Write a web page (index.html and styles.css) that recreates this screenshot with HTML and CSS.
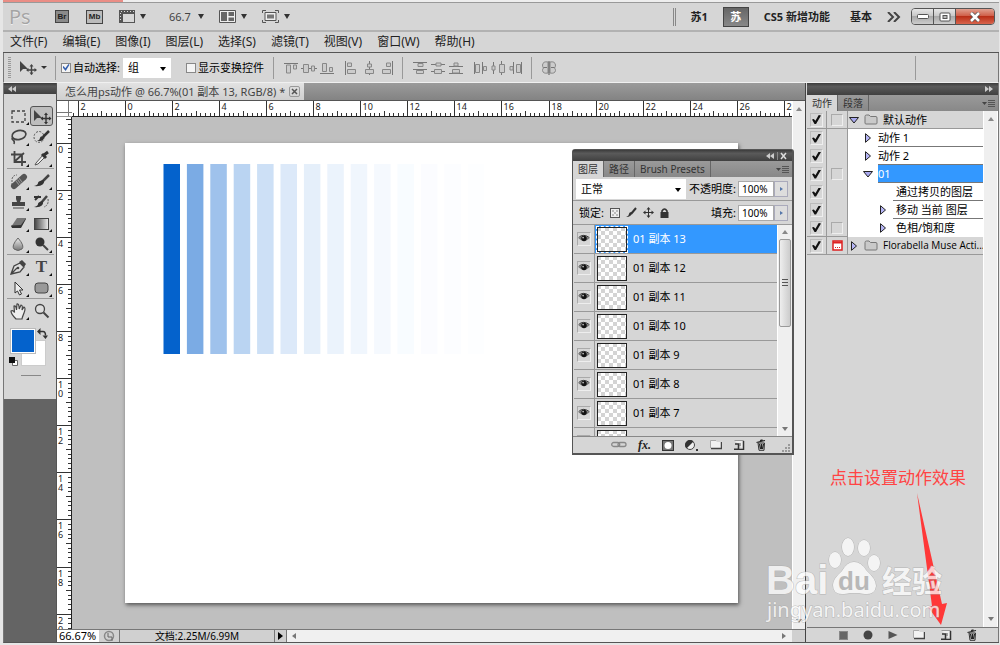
FILE: index.html
```html
<!DOCTYPE html>
<html lang="zh-CN">
<head>
<meta charset="utf-8">
<title>怎么用ps动作 @ 66.7%</title>
<link rel="stylesheet" href="styles.css">
</head>
<body>
<svg class="defs" aria-hidden="true">
  <defs>
    <pattern id="checker" width="8" height="8" patternUnits="userSpaceOnUse"><rect width="8" height="8" fill="#fff"/><path d="M0 0h4v4H0zM4 4h4v4H4z" fill="#d4d4d4"/></pattern>
    <linearGradient id="fade"><stop offset="0" stop-color="#444"/><stop offset="1" stop-color="#eee"/></linearGradient>
    <linearGradient id="drop" x2="0" y2="1"><stop offset="0" stop-color="#eee"/><stop offset="1" stop-color="#777"/></linearGradient>
  </defs>
  <symbol id="eye" viewBox="0 0 12 10"><path d="M0 5Q5-1 12 5Q6 10 0 5Z" fill="#777"/><path d="M0 4Q5-1 12 4" fill="none" stroke="#222"/><circle cx="6" cy="5" r="3" fill="#111"/><circle cx="5" cy="4" r="1" fill="#bbb"/></symbol>
  <symbol id="thumb" viewBox="0 0 30 25"><rect x=".5" y=".5" width="29" height="24" fill="url(#checker)" stroke="#222"/></symbol>
  <symbol id="folder" viewBox="0 0 14 11"><path d="M1 9V2.500Q1 1 2.500 1H5l1.500 1.500H12Q13 2.500 13 4v5Q13 10 12 10H2Q1 10 1 9Z" fill="#c9c9c9" stroke="#777"/></symbol>
  <symbol id="down" viewBox="0 0 10 8"><path d="M.5 1.500h9L5 7Z" fill="#a9a9f0" stroke="#222"/></symbol>
  <symbol id="right" viewBox="0 0 8 10"><path d="M1.500.7v8.600L6.500 5Z" fill="#b5b5f5" stroke="#222"/></symbol>
  <symbol id="menu" viewBox="0 0 14 9"><path d="M0 3h5L2.500 6Z" fill="#444"/><path d="M6 1.500h7M6 3.500h7M6 5.500h7M6 7.500h7" stroke="#555"/></symbol>
  <symbol id="move" viewBox="0 0 18 14"><path d="M1 0v11l3-3 1.500 0H9Z" fill="#444"/><path d="M12.500 4.500v9M8 9h9" stroke="#444" stroke-width="1.400"/><path d="M12.500 3l2 2.500h-4ZM12.500 14l2-2.500h-4ZM7 9l2.500-2v4ZM18 9l-2.500-2v4Z" fill="#444"/></symbol>
  <symbol id="newfolder" viewBox="0 0 12 10"><path d="M1 1h5l1 1h4v6H1Z" fill="#f2f2f2"/><path d="M11.500 2v6.500H1" fill="none" stroke="#444" stroke-width="1.500"/><path d="M.5 8V.5H6" fill="none" stroke="#aaa"/></symbol>
  <symbol id="newitem" viewBox="0 0 12 10"><path d="M1.500.5h9v9" fill="#eee" stroke="#999"/><path d="M10.500 1v8.500H6M1 9.200h4.500V4H2" fill="none" stroke="#333" stroke-width="1.500"/><path d="M7 3v3" stroke="#555"/></symbol>
  <symbol id="trash" viewBox="0 0 10 12"><path d="M2 4h6.500L8 11.300H3Z" fill="#ccc" stroke="#333"/><path d="M.5 3.500L9 1.500M4 1.500L6.500.8M3.500 5l1 5M5.500 5v5M7.500 5l-1 5" fill="none" stroke="#222" stroke-width="1.200"/></symbol>
</svg>

<div class="app">
  <header class="titlebar">
    <span class="logo">Ps</span>
    <button class="tile br">Br</button>
    <button class="tile mb">Mb</button>
    <button class="drop" aria-label="查看额外内容"><svg width="18" height="15"><path d="M1 1h16v13H1Z" fill="#555"/><path d="M5 5h11v8H5Z" fill="#d8d8d8"/><path d="M3 2.500h14M2.500 4v9" stroke="#ddd" stroke-dasharray="1 2"/></svg><i class="caret"></i></button>
    <button class="drop zoom"><span>66.7</span><i class="caret"></i></button>
    <button class="drop" aria-label="排列文档"><svg width="17" height="15"><path d="M.5 1.500h16v12H.5Z" fill="#eee" stroke="#555"/><path d="M2 3h6v9H2ZM9.500 3H15v4H9.500ZM9.500 8.500H15V12H9.500Z" fill="#666"/></svg><i class="caret"></i></button>
    <button class="drop" aria-label="屏幕模式"><svg width="17" height="15"><path d="M.5 4V1.500H4M13 1.500h3.500V4M16.500 11v2.500H13M4 13.500H.5V11" fill="none" stroke="#555"/><path d="M3 3.500h11v8H3Z" fill="#eee" stroke="#555"/><path d="M5 5.500h7v4H5Z" fill="#777"/></svg><i class="caret"></i></button>
    <nav class="spaces" aria-label="工作区">
      <button>苏1</button><button class="on">苏</button><button class="wide">CS5 新增功能</button><button>基本</button>
      <button aria-label="更多"><svg width="14" height="10"><path d="M1 0l5 5-5 5M7 0l5 5-5 5" fill="none" stroke="#444" stroke-width="2"/></svg></button>
    </nav>
    <div class="winbtns">
      <button aria-label="最小化"><svg width="12" height="6"><rect x=".5" y=".5" width="11" height="4" rx="1" fill="#fff" stroke="#555"/></svg></button>
      <button aria-label="最大化"><svg width="12" height="10"><rect x="1" y="1" width="10" height="8" rx="1" fill="#fff" stroke="#555"/><rect x="4" y="3.500" width="4" height="3" fill="#bbb" stroke="#555"/></svg></button>
      <button class="close" aria-label="关闭"><svg width="14" height="10"><path d="M3 1l8 8M11 1L3 9" stroke="#555" stroke-width="4"/><path d="M3 1l8 8M11 1L3 9" stroke="#fff" stroke-width="2.500"/></svg></button>
    </div>
  </header>

  <nav class="menubar" aria-label="菜单">
    <button>文件(F)</button><button>编辑(E)</button><button>图像(I)</button><button>图层(L)</button><button>选择(S)</button><button>滤镜(T)</button><button>视图(V)</button><button>窗口(W)</button><button>帮助(H)</button>
  </nav>

  <div class="options">
    <i class="grip"></i>
    <button class="current" aria-label="移动工具"><svg width="18" height="14"><use href="#move"/></svg><i class="caret small"></i></button>
    <label class="tick auto"><input type="checkbox" checked>自动选择:</label>
    <span class="select group"><select aria-label="自动选择"><option>组</option></select></span>
    <label class="tick"><input type="checkbox">显示变换控件</label>
    <div class="icons first">
      <button aria-label="顶对齐"><svg viewBox="0 0 16 14"><path d="M1 2.500h14" /><path d="M3.500 4h4v8h-4zM10.500 4h3v4h-3z" class="f"/></svg></button>
      <button aria-label="垂直居中对齐"><svg viewBox="0 0 16 14"><path d="M0 7.500h16"/><path d="M2.500 3.500h5v8h-5zM10.500 5h3v5h-3z" class="f"/></svg></button>
      <button aria-label="底对齐"><svg viewBox="0 0 16 14"><path d="M1 12.500h14"/><path d="M3.500 2.500h4v8h-4zM10.500 6.500h3v4h-3z" class="f"/></svg></button>
    </div>
    <div class="icons">
      <button aria-label="左对齐"><svg viewBox="0 0 16 14"><path d="M2.500 0v14"/><path d="M4.500 2h4v3.500h-4zM4.500 8.500h8v4h-8z" class="f"/></svg></button>
      <button aria-label="水平居中对齐"><svg viewBox="0 0 16 14"><path d="M8.500 0v14"/><path d="M6.500 3h4v3h-4zM4.500 8.500h8v4h-8z" class="f"/></svg></button>
      <button aria-label="右对齐"><svg viewBox="0 0 16 14"><path d="M13.500 0v14"/><path d="M7.500 2h4v3.500h-4zM3.500 8.500h8v4h-8z" class="f"/></svg></button>
    </div>
    <div class="icons ruled">
      <button aria-label="按顶分布"><svg viewBox="0 0 16 14"><path d="M1 1.500h14M1 8.500h14"/><path d="M6 2.500h5v3H6zM4.500 9.500h7v3h-7z" class="f"/></svg></button>
      <button aria-label="垂直居中分布"><svg viewBox="0 0 16 14"><path d="M1 3.500h14M1 10.500h14"/><path d="M6 2h5v3H6zM4.500 8.500h7v4h-7z" class="f"/></svg></button>
      <button aria-label="按底分布"><svg viewBox="0 0 16 14"><path d="M1 5.500h14M1 12.500h14"/><path d="M6 2h4v3H6zM4.500 8.500h7v3.500h-7z" class="f"/></svg></button>
    </div>
    <div class="icons">
      <button aria-label="按左分布"><svg viewBox="0 0 16 14"><path d="M2.500 1v12M10.500 1v12"/><path d="M3.500 3.500h4v8h-4zM11.500 5.500h3v4h-3z" class="f"/></svg></button>
      <button aria-label="水平居中分布"><svg viewBox="0 0 16 14"><path d="M3.500 1v12M11.500 0v14"/><path d="M2 5h3v4H2zM9.500 3.500h5v8h-5z" class="f"/></svg></button>
      <button aria-label="按右分布"><svg viewBox="0 0 16 14"><path d="M5.500 1v12M13.500 1v12"/><path d="M2 5.500h3v3.500H2zM8.500 3.500h4v8h-4z" class="f"/></svg></button>
    </div>
    <div class="icons last">
      <button aria-label="自动对齐图层"><svg viewBox="0 0 16 14"><path d="M7 1Q2 0 1.500 4q0 2 1 3q-1 1-1 2.500Q2 13 7 12ZM9 1q5-1 5.500 3q0 2-1 3q1 1 1 2.500Q14 13 9 12Z" class="f"/><path d="M2.500 6.500H6M10 6.500h3.500"/><path d="M8 0v14" stroke="#555"/></svg></button>
    </div>
  </div>

  <main class="work">
    <aside class="toolbox">
      <div class="dark left"><svg width="9" height="6"><path d="M4 0v6L0 3ZM8 0v6L4 3Z" fill="#ccc"/></svg></div>
      <div class="toolbody">
        <i class="dots"></i>
        <div class="tools">
          <button class="sub" aria-label="选框"><svg><rect x="3" y="4" width="13" height="11" fill="none" stroke="#444" stroke-width="1.300" stroke-dasharray="3 2"/></svg></button>
          <button class="on" aria-label="移动"><svg viewBox="0 0 20 18"><g transform="translate(1 3)"><path d="M1 0v11l3-3H9Z" fill="#444"/><path d="M13 4v9M8.500 8.500h9" stroke="#333" stroke-width="1.400"/><path d="M13 2.500l2 2.500h-4ZM13 14.500l2-2.500h-4ZM7.500 8.500l2.500-2v4ZM18.500 8.500l-2.500-2v4Z" fill="#333"/></g></svg></button>
          <button class="sub" aria-label="套索"><svg><ellipse cx="10" cy="7" rx="7" ry="4.500" transform="rotate(-12 10 7)" fill="none" stroke="#444" stroke-width="1.700"/><path d="M4 9q-2 2 0 3t1 4" fill="none" stroke="#444" stroke-width="1.500"/></svg></button>
          <button class="sub" aria-label="快速选择"><svg><ellipse cx="7" cy="9" rx="5" ry="5.500" fill="none" stroke="#555" stroke-dasharray="2 1.500"/><path d="M17 3l-6 6" stroke="#333" stroke-width="2.500"/><path d="M12 8q1 6-7 5q3-1 3-3t4-2" fill="#333"/></svg></button>
          <button class="sub" aria-label="裁剪"><svg><path d="M5.500 2v11H17M2 5.500h11V17M5 13L15 4" fill="none" stroke="#444" stroke-width="1.800"/></svg></button>
          <button class="sub" aria-label="吸管"><svg><path d="M4 14l7-8 2 2-7 7-3 1Z" fill="#eee" stroke="#555"/><path d="M10 5l4 4M12 6l4-3" stroke="#333" stroke-width="3"/></svg></button>
        </div>
        <div class="tools">
          <button class="sub" aria-label="修复画笔"><svg><path d="M3 13V7q1-4 5-4" fill="none" stroke="#666" stroke-dasharray="2 1"/><path d="M5 14L15 5" stroke="#555" stroke-width="6" stroke-linecap="round"/><path d="M8 11l4-3" stroke="#999" stroke-width="5" stroke-dasharray="1 1"/></svg></button>
          <button class="sub" aria-label="画笔"><svg><path d="M17 3l-7 7" stroke="#444" stroke-width="2.500"/><path d="M12 8q1 7-10 6q4-1 4-3t6-3" fill="#333"/></svg></button>
          <button class="sub" aria-label="图章"><svg><path d="M7 3h5v3l-1 3h5v4H3V9h5L7 6Z" fill="#444"/><path d="M4 15h11" stroke="#444"/></svg></button>
          <button class="sub" aria-label="历史画笔"><svg><path d="M15 3l-6 7" stroke="#444" stroke-width="2.500"/><path d="M11 8q1 7-9 6q4-1 4-3t5-3" fill="#333"/><path d="M2 4h7M3 7l4-4" stroke="#333" stroke-width="2"/><path d="M16 6q1 6-4 8" fill="none" stroke="#555" stroke-dasharray="2 1"/></svg></button>
          <button class="sub" aria-label="橡皮擦"><svg><path d="M2 13l6-9h9l-5 9Z" fill="#777"/><path d="M2 11.500l1 2.500h9l5-9v-1l-5 7Z" fill="#333"/></svg></button>
          <button class="sub" aria-label="渐变"><svg><rect x="2.500" y="4.500" width="14" height="11" fill="url(#fade)" stroke="#444"/></svg></button>
          <button class="sub" aria-label="模糊"><svg><path d="M9 3q7 8 4 11q-4 3-8 0q-3-3 4-11" fill="url(#drop)" stroke="#666"/></svg></button>
          <button class="sub" aria-label="减淡"><svg><circle cx="8" cy="7" r="4.500" fill="#333"/><path d="M11 10l5 5" stroke="#444" stroke-width="2"/></svg></button>
        </div>
        <div class="tools">
          <button class="sub" aria-label="钢笔"><svg><path d="M2 16L5 8l6-3 4 4-4 5ZM2 16l6-6" fill="#ddd" stroke="#444" stroke-width="1.300"/><path d="M10 4l3-2 4 4-2 3Z" fill="#444"/><circle cx="9" cy="10" r="1.300" fill="#444"/></svg></button>
          <button class="sub type">T</button>
          <button class="sub" aria-label="路径选择"><svg><path d="M6 3v11l2.500-2 2 4 2-1-2-4H14Z" fill="#eee" stroke="#333"/></svg></button>
          <button class="sub" aria-label="圆角矩形"><svg><rect x="3" y="4" width="13" height="10" rx="3" fill="#999" stroke="#444"/></svg></button>
        </div>
        <div class="tools">
          <button class="sub" aria-label="抓手"><svg><path d="M7 17Q2 12 2 9q2-1 3.500 1.500L5 4q2-1 2.500 4L8 2q2-1 2.200 5L12 3q2 0 1 5l2-3q2 1 0 6t-2 6Z" fill="#eee" stroke="#444" stroke-width="1.200"/></svg></button>
          <button aria-label="缩放"><svg><circle cx="8" cy="7" r="4.500" fill="#ddd" stroke="#444" stroke-width="1.300"/><path d="M11.500 10.500l5 5" stroke="#444" stroke-width="2"/></svg></button>
        </div>
        <div class="swatches">
          <button class="bg" aria-label="背景色"></button>
          <button class="fg" aria-label="前景色"></button>
          <button class="swap" aria-label="切换颜色"><svg width="11" height="11"><path d="M2 3.500h4q2.500 0 2.500 4" fill="none" stroke="#333" stroke-width="1.500"/><path d="M0 3.500L3.500 0v7ZM8.500 11L5.500 7.500h5.500Z" fill="#333"/></svg></button>
          <button class="reset" aria-label="默认颜色"><svg width="10" height="10"><path d="M3.500 3.500h5v5h-5Z" fill="#fff" stroke="#666"/><path d="M0 0h6v6H0Z" fill="#111"/></svg></button>
        </div>
        <i class="mask"></i>
      </div>
    </aside>

    <section class="doc">
      <div class="tabs"><div class="doctab">怎么用ps动作 @ 66.7%(01 副本 13, RGB/8) *<button aria-label="关闭文档"><svg width="9" height="9"><path d="M2 2l5 5M7 2L2 7" stroke="#555" stroke-width="1.500"/></svg></button></div></div>
      <i class="corner"></i>
      <svg class="hruler" id="hruler"></svg>
      <svg class="vruler" id="vruler"></svg>
      <div class="stage">
        <svg class="art" viewBox="0 0 613 460" id="art"></svg>
      </div>
      <div class="vscroll"><i class="up"></i><i class="dn"></i></div>
      <footer class="status">
        <input class="pct" value="66.67%" aria-label="缩放比例">
        <svg class="clock" width="12" height="12"><circle cx="6" cy="6" r="4.500" fill="none" stroke="#888" stroke-width="1.500"/><path d="M5 3v4h4v4" fill="none" stroke="#666"/></svg>
        <span class="size">文档:2.25M/6.99M</span>
        <button class="more" aria-label="状态菜单"></button>
        <div class="hscroll"><i class="lf"></i><i class="rt"></i></div>
      </footer>
    </section>

    <aside class="actions">
      <div class="dark right"><svg width="9" height="6"><path d="M0 0v6l4-3ZM4 0v6l4-3Z" fill="#ccc"/></svg></div>
      <div class="ptabs"><button class="on">动作</button><button>段落</button><button class="pm" aria-label="面板菜单"><svg width="14" height="9"><use href="#menu"/></svg></button></div>
      <div class="abody">
        <ul>
          <li class="set"><label><input type="checkbox" checked aria-label="默认动作"></label><span class="dlg"><b></b></span><span class="nm"><svg width="10" height="8"><use href="#down"/></svg><svg class="fd" width="14" height="11"><use href="#folder"/></svg>默认动作</span></li>
          <li><label><input type="checkbox" checked aria-label="动作 1"></label><span class="dlg"></span><span class="nm l1"><svg width="8" height="10"><use href="#right"/></svg><em>动作 1</em></span></li>
          <li><label><input type="checkbox" checked aria-label="动作 2"></label><span class="dlg"></span><span class="nm l1"><svg width="8" height="10"><use href="#right"/></svg><em>动作 2</em></span></li>
          <li class="sel"><label><input type="checkbox" checked aria-label="01"></label><span class="dlg"><b></b></span><span class="nm l1"><svg width="10" height="8"><use href="#down"/></svg><em>01</em></span></li>
          <li><label><input type="checkbox" checked aria-label="通过拷贝的图层"></label><span class="dlg"></span><span class="nm l2"><i></i><em>通过拷贝的图层</em></span></li>
          <li><label><input type="checkbox" checked aria-label="移动 当前 图层"></label><span class="dlg"></span><span class="nm l2"><svg width="8" height="10"><use href="#right"/></svg><em>移动 当前 图层</em></span></li>
          <li class="end"><label><input type="checkbox" checked aria-label="色相/饱和度"></label><span class="dlg"><b></b></span><span class="nm l2"><svg width="8" height="10"><use href="#right"/></svg><em>色相/饱和度</em></span></li>
          <li class="set"><label><input type="checkbox" checked aria-label="Florabella Muse Actions"></label><span class="dlg"><svg width="11" height="11"><path d="M1 1h9v9H1Z" fill="#fff" stroke="#d22" stroke-width="1.500"/><path d="M1 2.500h9" stroke="#d22" stroke-width="2"/><path d="M3 7.500h5" stroke="#d22" stroke-dasharray="1 1"/></svg></span><span class="nm latin"><svg width="8" height="10"><use href="#right"/></svg><svg class="fd" width="14" height="11"><use href="#folder"/></svg>Florabella Muse Acti...</span></li>
        </ul>
        <div class="pscroll"><i class="up"></i><i class="dn"></i></div>
      </div>
      <div class="afoot">
        <button aria-label="停止"><svg width="9" height="9"><rect x=".5" y=".5" width="8" height="8" fill="#666" stroke="#888"/></svg></button>
        <button aria-label="录制"><svg width="10" height="10"><circle cx="5" cy="5" r="4.500" fill="#444"/></svg></button>
        <button aria-label="播放"><svg width="10" height="10"><path d="M.5 1v8L9.500 5Z" fill="#555"/></svg></button>
        <button aria-label="新建组"><svg width="12" height="10"><use href="#newfolder"/></svg></button>
        <button aria-label="新建动作"><svg width="12" height="10"><use href="#newitem"/></svg></button>
        <button aria-label="删除"><svg width="10" height="12"><use href="#trash"/></svg></button>
      </div>
    </aside>

    <section class="layers">
      <div class="dark right"><svg width="22" height="8"><path d="M4 1v6L0 4ZM8 1v6L4 4Z" fill="#ccc"/><path d="M11.500 0v8" stroke="#888"/><path d="M15 1l5 6M20 1l-5 6" stroke="#ddd" stroke-width="1.500"/></svg></div>
      <div class="ptabs"><button class="on">图层</button><button>路径</button><button>Brush Presets</button><button class="pm" aria-label="面板菜单"><svg width="14" height="9"><use href="#menu"/></svg></button></div>
      <div class="lrow">
        <span class="select blend"><select aria-label="混合模式"><option>正常</option></select></span>
        <label class="num">不透明度:<input value="100%"></label><button class="step" aria-label="调整不透明度"></button>
      </div>
      <div class="lrow">
        <span class="lock">锁定:
          <svg width="10" height="10"><rect x=".5" y=".5" width="9" height="9" fill="#eee" stroke="#555"/><path d="M2 2h2v2H2ZM6 2h2v2H6ZM4 4h2v2H4ZM2 6h2v2H2ZM6 6h2v2H6Z" fill="#bbb"/></svg>
          <svg width="11" height="11"><path d="M10 1L5 7" stroke="#333" stroke-width="2"/><path d="M6 5q0 5-6 5q3-1 3-3t3-2" fill="#333"/></svg>
          <svg width="11" height="11"><path d="M5.500 1v9M1 5.500h9" stroke="#333"/><path d="M5.500 0l2 2.500h-4ZM5.500 11l2-2.500h-4ZM0 5.500l2.500-2v4ZM11 5.500l-2.500-2v4Z" fill="#333"/></svg>
          <svg width="9" height="10"><path d="M2 5V3q2.500-4 5 0v2" fill="none" stroke="#333" stroke-width="1.600"/><rect x=".5" y="4" width="8" height="6" fill="#333"/></svg>
        </span>
        <label class="num">填充:<input value="100%"></label><button class="step" aria-label="调整填充"></button>
      </div>
      <div class="lbody">
        <ul>
          <li class="sel"><button aria-label="可见"><svg width="12" height="10"><use href="#eye"/></svg></button><svg class="th" width="30" height="25"><use href="#thumb"/></svg>01 副本 13</li>
          <li><button aria-label="可见"><svg width="12" height="10"><use href="#eye"/></svg></button><svg class="th" width="30" height="25"><use href="#thumb"/></svg>01 副本 12</li>
          <li><button aria-label="可见"><svg width="12" height="10"><use href="#eye"/></svg></button><svg class="th" width="30" height="25"><use href="#thumb"/></svg>01 副本 11</li>
          <li><button aria-label="可见"><svg width="12" height="10"><use href="#eye"/></svg></button><svg class="th" width="30" height="25"><use href="#thumb"/></svg>01 副本 10</li>
          <li><button aria-label="可见"><svg width="12" height="10"><use href="#eye"/></svg></button><svg class="th" width="30" height="25"><use href="#thumb"/></svg>01 副本 9</li>
          <li><button aria-label="可见"><svg width="12" height="10"><use href="#eye"/></svg></button><svg class="th" width="30" height="25"><use href="#thumb"/></svg>01 副本 8</li>
          <li><button aria-label="可见"><svg width="12" height="10"><use href="#eye"/></svg></button><svg class="th" width="30" height="25"><use href="#thumb"/></svg>01 副本 7</li>
          <li><button aria-label="可见"><svg width="12" height="10"><use href="#eye"/></svg></button><svg class="th" width="30" height="25"><use href="#thumb"/></svg>01 副本 6</li>
        </ul>
        <div class="pscroll thumbed"><i class="up"></i><b></b><i class="dn"></i></div>
      </div>
      <div class="lfoot">
        <button aria-label="链接图层"><svg width="16" height="8"><rect x=".7" y="1.500" width="8" height="4" rx="2" fill="none" stroke="#888" stroke-width="1.300"/><rect x="7" y="1.500" width="8" height="4" rx="2" fill="none" stroke="#888" stroke-width="1.300"/></svg></button>
        <button class="fx">fx.</button>
        <button aria-label="蒙版"><svg width="12" height="11"><rect x=".5" y=".5" width="11" height="10" fill="#777" stroke="#333"/><circle cx="6" cy="5.500" r="3.500" fill="#fff"/></svg></button>
        <button aria-label="调整图层"><svg width="14" height="11"><circle cx="5" cy="5" r="4.500" fill="#eee" stroke="#444"/><path d="M8.500 1.500A4.800 4.800 0 1 0 1.500 8.500Z" fill="#333"/><path d="M11 9h2v2h-2z" fill="#333"/></svg></button>
        <button aria-label="新建组"><svg width="12" height="10"><use href="#newfolder"/></svg></button>
        <button aria-label="新建图层"><svg width="12" height="10"><use href="#newitem"/></svg></button>
        <button aria-label="删除图层"><svg width="10" height="12"><use href="#trash"/></svg></button>
        <svg class="size-grip" width="9" height="9"><path d="M7 1h2M4 4h2M7 4h2M1 7h2M4 7h2M7 7h2" stroke="#999" stroke-width="2"/></svg>
      </div>
    </section>
  </main>

  <svg class="overlay" viewBox="760 465 240 180" width="240" height="180">
    <text x="830" y="484" class="note">点击设置动作效果</text>
    <path d="M917 493L932 606L928 607L941 625L947 603L942 604Z" fill="#ff3838"/>
    <g class="mark">
      <text x="766" y="594" class="bai">Bai</text>
      <ellipse cx="835" cy="560" rx="6" ry="8"/><ellipse cx="848" cy="547" rx="6" ry="9"/><ellipse cx="864" cy="548" rx="6" ry="8"/><ellipse cx="874" cy="563" rx="6" ry="8"/>
      <path d="M854 562Q861 562 866 570Q876 579 876 586Q875 595 865 594Q854 592 844 594Q833 595 833 585Q833 579 842 571Q847 562 854 562Z"/>
      <text x="882" y="592" class="jy">经验</text>
      <text x="767" y="617" class="url">jingyan.baidu.com</text>
    </g>
    <text x="838" y="590" class="du">du</text>
  </svg>
</div>
<script src="rulers.js"></script>
</body>
</html>
```
FILE: styles.css
```css
* { box-sizing: border-box; }
body {
  margin: 0;
  font: 11px/16px "Noto Sans", "Noto Sans CJK SC", sans-serif;
  color: #222;
  background: #d6d6d6;
}
button, input, select { font: inherit; color: inherit; margin: 0; padding: 0; border: 0; background: none; border-radius: 0; }
ul { list-style: none; margin: 0; padding: 0; }
em, i { font-style: normal; }
svg { display: block; flex: none; }
.defs { position: absolute; width: 0; height: 0; }

.app {
  position: relative;
  display: flex;
  flex-direction: column;
  height: 100vh;
  min-width: 960px;
  overflow: hidden;
  border-left: 3px solid #e6e6e6;
  border-right: 1px solid #e6e6e6;
  border-bottom: 2px solid #e6e6e6;
}
.app::before {
  content: "";
  height: 2px;
  margin: 0 0 0 -3px;
  flex: none;
  background: linear-gradient(90deg, #ea8d85 123px, #eee 123px);
}

.caret { width: 0; border: 3px solid transparent; border-top: 5px solid #333; border-bottom: 0; }
.caret.small { border-top-width: 3px; }

/* title bar */
.titlebar {
  display: flex;
  align-items: center;
  flex: none;
  height: 30px;
  padding: 0 4px 0 6px;
  border-top: 1px solid #999;
  border-bottom: 2px solid #b2b2b2;
}
.logo { width: 46px; font: 20px/26px "Open Sans", sans-serif; color: #a4a4a4; text-shadow: 0 1px #eee; }
.tile { width: 14px; height: 13px; font: bold 8px/11px "Liberation Sans", sans-serif; color: #222; border: 1px solid #444; background: #8a8a8a; text-align: center; }
.tile.mb { width: 17px; height: 14px; margin-left: 17px; margin-right: 15px; background: #bbb; }
.drop { display: flex; align-items: center; gap: 4px; margin-right: 15px; width: 28px; justify-content: space-between; }
.drop.zoom { width: 35px; margin-left: 8px; font-size: 11px; color: #444; }
.spaces { display: flex; align-items: center; margin-left: auto; padding-left: 14px; border-left: 3px double #888; gap: 15px; font-weight: bold; font-size: 11px; height: 18px; }
.spaces .on { width: 26px; height: 20px; border: 1px solid #444; color: #fff; background: linear-gradient(#666, #888); }
.spaces .wide { margin-right: 5px; }
.winbtns { display: flex; height: 17px; margin-left: 10px; border: 1px solid #555; border-radius: 4px; overflow: hidden; }
.winbtns button { display: grid; place-items: center; width: 22px; background: linear-gradient(#e6e6e6, #c9c9c9 45%, #a9a9a9 50%, #ccc); border-right: 1px solid #555; }
.winbtns .close { width: 38px; border: 0; background: linear-gradient(#e0a090, #d0604a 45%, #b92f18 50%, #d8644c); }

.menubar { display: flex; align-items: center; flex: none; gap: 15px; height: 21px; padding: 0 7px; border-bottom: 1px solid #555; font-size: 12px; }

/* options bar */
.options { display: flex; align-items: center; flex: none; height: 30px; border-left: 1px solid #777; border-right: 1px solid #777; border-bottom: 1px solid #f0f0f0; padding-left: 4px; }
.grip { width: 3px; height: 22px; background: repeating-linear-gradient(#999 0 1px, transparent 1px 2px); }
.current { display: flex; align-items: center; gap: 4px; height: 24px; margin-left: 8px; padding-right: 8px; border-right: 1px solid #999; }
.tick { display: flex; align-items: center; gap: 2px; color: #000; }
.tick.auto { margin-left: 5px; width: 62px; white-space: nowrap; }
.tick input { appearance: none; width: 10px; height: 10px; border: 1px solid #888; background: #f4f4f4; display: grid; place-items: center; }
.tick input:checked::before { content: ""; width: 7px; height: 7px; background: #345fae; clip-path: polygon(0 45%, 15% 30%, 40% 60%, 85% 0, 100% 12%, 45% 100%); }
.select { position: relative; display: block; background: #fff; color: #000; }
.select select { appearance: none; width: 100%; height: 20px; padding: 0 5px; outline: 0; }
.select::after { content: ""; position: absolute; right: 5px; top: 9px; border: 3px solid transparent; border-top: 4px solid #000; border-bottom: 0; pointer-events: none; }
.select.group { width: 48px; margin-right: 15px; }
.icons { display: flex; align-items: center; height: 22px; margin-left: 6px; }
.icons.first { margin-left: 9px; padding-left: 8px; border-left: 1px solid #999; }
.icons.ruled, .icons.last { padding-left: 8px; border-left: 1px solid #999; }
.icons button { width: 18px; display: grid; place-items: center; }
.icons svg { width: 16px; height: 14px; fill: none; stroke: #777; }
.icons .f { fill: #ccc; stroke: #888; }
.options::after { content: ""; width: 1px; height: 24px; background: #999; margin-left: auto; margin-right: 82px; }

/* workspace */
.work { position: relative; display: grid; grid-template-columns: 53px 1fr 193px; flex: 1; min-height: 0; border-bottom: 1px solid #555; border-left: 1px solid #777; }
.dark { display: flex; align-items: center; height: 11px; padding: 0 4px; background: linear-gradient(#3c3c3c, #5a5a5a 30%, #404040); }
.dark.right { justify-content: flex-end; }

.toolbox { background: #646464; border-right: 1px solid #555; }
.toolbody { background: #d6d6d6; padding: 4px 2px 0 3px; height: 305px; }
.dots { display: block; height: 3px; margin: 0 3px 5px; background: radial-gradient(#999 40%, transparent 50%) 0 0 / 2px 2px; }
.tools { display: grid; grid-template-columns: 23px 23px; grid-auto-rows: 20px; row-gap: 1px; margin-bottom: 2px; border-bottom: 1px solid #999; }
.tools:nth-of-type(4) { border-bottom-color: transparent; }
.tools button { position: relative; display: grid; place-items: center; }
.tools svg { width: 20px; height: 18px; }
.tools .on { border: 1px solid #555; border-radius: 3px; background: #bdbdbd; }
.tools .sub::after { content: ""; position: absolute; right: 1px; bottom: 1px; border-left: 3px solid transparent; border-bottom: 3px solid #111; }
.tools .type { font: bold 17px/18px "Liberation Serif", serif; color: #444; }
.swatches { position: relative; height: 40px; margin-top: 6px; }
.swatches button { position: absolute; }
.swatches .fg { left: 4px; top: 1px; width: 24px; height: 24px; background: #0462cc; border: 1px solid #fff; outline: 1px solid #bbb; }
.swatches .bg { left: 14px; top: 12px; width: 25px; height: 26px; background: #fff; border: 1px solid #ccc; }
.swap { left: 30px; top: 0; }
.reset { left: 2px; top: 29px; }
.mask { display: block; width: 20px; height: 1px; margin: 7px auto 0; background: #888; }

/* document */
.doc { display: grid; grid-template: 18px 16px minmax(0, 1fr) 13px / 15px minmax(0, 1fr) 13px; background: #bfbfbf; border-right: 1px solid #444; min-width: 0; min-height: 0; }
.tabs { grid-column: 1 / -1; background: linear-gradient(#9b9b9b, #838383); border-bottom: 1px solid #555; }
.doctab { display: inline-flex; align-items: center; gap: 4px; height: 17px; padding: 0 4px 0 8px; background: linear-gradient(#e2e2e2, #cfcfcf); color: #444; white-space: nowrap; }
.doctab button { width: 11px; height: 11px; border: 1px solid #999; border-radius: 2px; }
.corner { background: #fff; background-image: linear-gradient(90deg, transparent 11px, #777 11px 12px, transparent 12px), linear-gradient(transparent 11px, #777 11px 12px, transparent 12px); border-bottom: 1px solid #999; }
.hruler { width: 100%; height: 16px; background: #fff; border-bottom: 1px solid #222; }
.vruler { width: 15px; height: 100%; background: #fff; border-right: 1px solid #222; }
.hruler text, .vruler text { font-size: 9px; fill: #222; }
.stage { padding: 26px 0 0 53px; overflow: hidden; min-height: 0; }
.art { width: 613px; height: 460px; background: #fff; box-shadow: 1px 2px 4px #555; }
.vscroll { grid-area: 2 / 3 / 4 / 4; }
.vscroll, .pscroll { display: flex; flex-direction: column; justify-content: space-between; align-items: center; padding: 6px 0; background: #efefef; border-left: 1px solid #fff; }
.up, .dn { width: 0; border: 3px solid transparent; }
.up { border-top: 0; border-bottom: 4px solid #888; }
.dn { border-bottom: 0; border-top: 4px solid #777; }
.status { grid-column: 1 / -1; display: flex; align-items: center; border-top: 1px solid #777; background: #d0d0d0; color: #000; padding-right: 13px; line-height: 12px; }
.pct { width: 42px; height: 12px; padding-left: 2px; background: #fff; line-height: 12px; }
.clock { margin: 0 4px; }
.size { width: 156px; border-left: 1px solid #777; border-right: 1px solid #777; text-align: center; font-size: 10px; }
.more { width: 12px; height: 12px; border-right: 1px solid #777; display: grid; place-items: center; }
.more::before { content: ""; border: 4px solid transparent; border-left: 5px solid #000; border-right: 0; }
.hscroll { flex: 1; display: flex; justify-content: space-between; align-items: center; height: 12px; padding: 0 6px 0 5px; background: #f0f0f0; }
.lf, .rt { border: 3px solid transparent; }
.lf { border-left: 0; border-right: 4px solid #777; }
.rt { border-right: 0; border-left: 4px solid #777; }

/* panels */
.ptabs { display: flex; height: 16px; background: linear-gradient(#9a9a9a, #888); color: #333; }
.ptabs button { padding: 0 5px; border-right: 1px solid #666; font-size: 10px; line-height: 15px; white-space: nowrap; }
.ptabs .on { background: #d6d6d6; }
.ptabs .pm { margin-left: auto; padding: 4px 2px; border: 0; }
.actions { display: flex; flex-direction: column; background: #d6d6d6; border-right: 1px solid #777; padding-left: 1px; min-height: 0; }
.actions .dark { height: 12px; flex: none; }
.abody { flex: 1; display: flex; min-height: 0; }
.abody ul { flex: 1; min-width: 0; }
.abody .pscroll { width: 15px; border-right: 1px solid #fff; }
.abody li { display: grid; grid-template-columns: 20px 21px minmax(0, 1fr); height: 18px; color: #000; }
.abody label { display: grid; place-items: center; border-right: 1px solid #999; }
.abody label input { appearance: none; width: 13px; height: 14px; display: grid; place-items: center; border: 1px solid #bbb; border-right-color: #eee; border-bottom-color: #eee; }
.abody label input:checked::before { content: ""; width: 9px; height: 9px; background: #111; clip-path: polygon(0 50%, 20% 45%, 38% 65%, 75% 0, 100% 5%, 45% 100%, 28% 100%); }
.dlg { display: grid; place-items: center; border-right: 1px solid #999; }
.dlg b { width: 12px; height: 12px; border: 1px solid #aaa; border-right-color: #eee; border-bottom-color: #eee; }
.nm { display: flex; align-items: center; gap: 5px; background: #fff; padding-left: 15px; white-space: nowrap; line-height: 17px; }
.nm > svg:first-child, .nm > i { width: 10px; }
.nm em { flex: 1; align-self: stretch; border-bottom: 1px solid #777; }
.nm.l2 { padding-left: 30px; }
.nm.l2 em { padding-left: 3px; }
.nm.latin { font: 10px/17px "Open Sans", sans-serif; }
.set .nm { background: #d6d6d6; padding-left: 1px; }
.set .nm, .set .dlg, .set label, .end .dlg, .end label { border-bottom: 1px solid #999; }
.end .nm.l2 em { border-bottom-color: transparent; }
.abody .sel em { background: #3398ff; color: #fff; }
.afoot { display: flex; align-items: center; justify-content: space-between; height: 15px; padding: 0 21px 0 32px; border-top: 1px solid #777; }
.afoot button, .lfoot button { display: grid; place-items: center; }

.layers { position: absolute; top: 66px; right: 205px; width: 222px; background: #d6d6d6; border: 2px solid #555; border-width: 1px 2px 2px 1px; border-radius: 3px 3px 0 0; }
.lrow { display: flex; align-items: center; height: 24px; padding: 0 4px 0 3px; border-bottom: 1px solid #999; color: #000; }
.blend { width: 110px; }
.num { display: flex; align-items: center; gap: 2px; margin-left: auto; white-space: nowrap; }
.num input { width: 36px; height: 16px; padding-left: 3px; background: #fff; border: 1px solid #aaa; font-size: 10px; }
.step { display: grid; place-items: center; width: 14px; height: 16px; border: 1px solid #aab; background: #ddd; }
.step::before { content: ""; border: 2px solid transparent; border-left: 3px solid #57a; border-right: 0; }
.lock { display: flex; align-items: center; gap: 6px; padding-left: 3px; }
.lbody { display: flex; height: 211px; overflow: hidden; }
.lbody ul { flex: 1; padding-left: 1px; }
.lbody li { display: flex; align-items: center; height: 29px; border-bottom: 1px solid #999; color: #000; }
.lbody li button { display: grid; place-items: center; align-self: stretch; width: 21px; border-right: 1px solid #999; background: #d6d6d6; }
.lbody li button svg { width: 14px; height: 14px; padding: 1px 0 2px; border: 1px solid #aaa; border-right-color: #eee; border-bottom-color: #eee; }
.lbody .th { margin: 0 6px 0 2px; }
.lbody .sel { background: #3398ff; color: #fff; }
.lbody .sel .th { outline: 1px dashed #fff; }
.lbody .pscroll { width: 15px; padding: 5px 0; }
.thumbed b { width: 12px; height: 88px; margin: 5px 0 auto; border: 1px solid #999; border-radius: 2px; background: repeating-linear-gradient(#555 0 1px, transparent 1px 3px) 50% 50% / 6px 8px no-repeat, linear-gradient(90deg, #eee, #ccc); }
.lfoot { display: flex; align-items: center; height: 17px; padding: 0 2px 0 38px; gap: 11px; border-top: 1px solid #888; }
.lfoot .fx { font: italic bold 12px/15px "Liberation Serif", serif; }
.size-grip { margin-left: auto; align-self: flex-end; }

/* annotation and watermark */
.overlay { position: absolute; right: -1px; bottom: -2px; pointer-events: none; }
.note { font: 17px "Noto Sans CJK SC", sans-serif; fill: #f44; }
.mark { fill: #fff; stroke: #aaa; stroke-width: 1px; paint-order: stroke; opacity: .75; }
.bai { font: bold 40px "Liberation Sans", sans-serif; }
.du { font: bold 26px "Liberation Sans", sans-serif; fill: #b8b8b8; }
.jy { font: bold 30px "Noto Sans CJK SC", sans-serif; }
.url { font: 20px "Noto Sans", sans-serif; }
```
FILE: rulers.js
```js
const NS = "http://www.w3.org/2000/svg";
const UNIT = 23.53; // one centimetre at 66.7%

function add(parent, name, attrs, text) {
  const node = document.createElementNS(NS, name);
  for (const key in attrs) node.setAttribute(key, attrs[key]);
  if (text !== undefined) node.textContent = text;
  parent.appendChild(node);
}

function drawRuler(svg, origin, vertical) {
  svg.replaceChildren();
  const length = vertical ? svg.clientHeight : svg.clientWidth;
  const minor = UNIT / 5;
  for (let i = -20; origin + i * minor < length; i++) {
    const at = Math.round(origin + i * minor) + 0.5;
    if (at < 0) continue;
    const size = i % 10 === 0 ? 15 : i % 5 === 0 ? 5 : 3;
    const d = vertical ? `M${14 - size} ${at}H14` : `M${at} ${15 - size}V15`;
    add(svg, "path", { d, stroke: "#333" });
    if (i % 10 === 0) {
      const label = String(Math.abs(i / 5));
      if (vertical) [...label].forEach((c, n) => add(svg, "text", { x: 1, y: at + 9 + n * 9 }, c));
      else add(svg, "text", { x: at + 2, y: 9 }, label);
    }
  }
}

const colours = ["#0462cc", "#7babe4", "#9fc2ec", "#bad4f2", "#cde0f6", "#dce9f9", "#e5effa",
  "#ebf3fc", "#f0f6fd", "#f5f9fe", "#f8fcff", "#fbfcff", "#fcfdff", "#fdfeff"];
const art = document.getElementById("art");
colours.forEach((fill, i) => add(art, "rect", { x: 38.5 + i * 23.4, y: 21, width: 16.5, height: 190, fill }));

function draw() {
  drawRuler(document.getElementById("hruler"), 53, false);
  drawRuler(document.getElementById("vruler"), 26, true);
}
draw();
addEventListener("resize", draw);
```
